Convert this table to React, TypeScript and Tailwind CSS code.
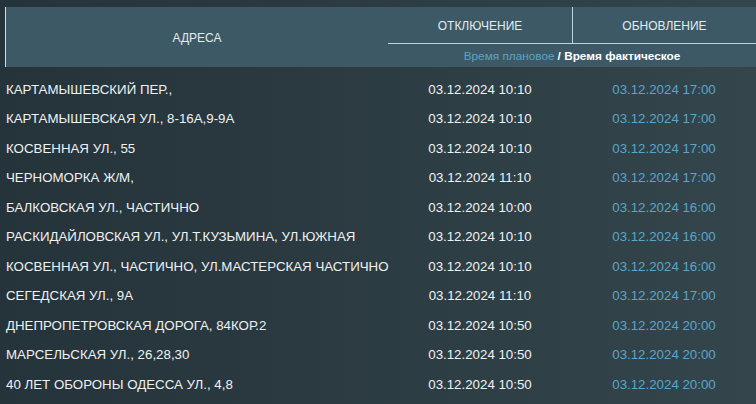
const rows: [string, string, string][] = [
  ["КАРТАМЫШЕВСКИЙ ПЕР.,", "03.12.2024 10:10", "03.12.2024 17:00"],
  ["КАРТАМЫШЕВСКАЯ УЛ., 8-16А,9-9А", "03.12.2024 10:10", "03.12.2024 17:00"],
  ["КОСВЕННАЯ УЛ., 55", "03.12.2024 10:10", "03.12.2024 17:00"],
  ["ЧЕРНОМОРКА Ж/М,", "03.12.2024 11:10", "03.12.2024 17:00"],
  ["БАЛКОВСКАЯ УЛ., ЧАСТИЧНО", "03.12.2024 10:00", "03.12.2024 16:00"],
  ["РАСКИДАЙЛОВСКАЯ УЛ., УЛ.Т.КУЗЬМИНА, УЛ.ЮЖНАЯ", "03.12.2024 10:10", "03.12.2024 16:00"],
  ["КОСВЕННАЯ УЛ., ЧАСТИЧНО, УЛ.МАСТЕРСКАЯ ЧАСТИЧНО", "03.12.2024 10:10", "03.12.2024 16:00"],
  ["СЕГЕДСКАЯ УЛ., 9А", "03.12.2024 11:10", "03.12.2024 17:00"],
  ["ДНЕПРОПЕТРОВСКАЯ ДОРОГА, 84КОР.2", "03.12.2024 10:50", "03.12.2024 20:00"],
  ["МАРСЕЛЬСКАЯ УЛ., 26,28,30", "03.12.2024 10:50", "03.12.2024 20:00"],
  ["40 ЛЕТ ОБОРОНЫ ОДЕССА УЛ., 4,8", "03.12.2024 10:50", "03.12.2024 20:00"],
];

export default function App() {
  return (
    <div className="h-[404px] w-[756px] overflow-hidden bg-gradient-to-r from-[#25333a] to-[#34454c] pt-[7px] pl-[5px] font-['Liberation_Sans',Arial,sans-serif]">
      {/* шапка таблицы */}
      <div className="grid h-[60px] grid-cols-[383px_184px_184px] bg-[#3c5965] text-[12px] text-[#e2ecf0]">
        <div className="row-span-2 flex items-center justify-center border-l border-[#c4e2ee] pt-[1px]">
          АДРЕСА
        </div>
        <div className="flex h-[37px] items-center justify-center border-b border-[#bcd6e0] pt-[2px]">ОТКЛЮЧЕНИЕ</div>
        <div className="flex h-[37px] items-center justify-center border-b border-l border-[#bcd6e0] pt-[2px]">ОБНОВЛЕНИЕ</div>
        <div className="col-span-2 flex items-center justify-center whitespace-nowrap text-[11.8px]">
          <span className="text-[#5aa4c6]">Время плановое</span>
          <span className="ml-[3px] font-bold text-white">/ Время фактическое</span>
        </div>
      </div>

      <div className="mt-[8px]">
        {rows.map(([addr, off, upd], i) => (
          <div key={i} className="grid h-[29.5px] grid-cols-[383px_184px_184px] items-center whitespace-nowrap text-[13.3px]">
            <div className="pl-[1px] text-[#eef2f3]">{addr}</div>
            <div className="text-center text-[#eef2f3]">{off}</div>
            <div className="text-center text-[#5aa6c9]">{upd}</div>
          </div>
        ))}
      </div>
    </div>
  );
}
